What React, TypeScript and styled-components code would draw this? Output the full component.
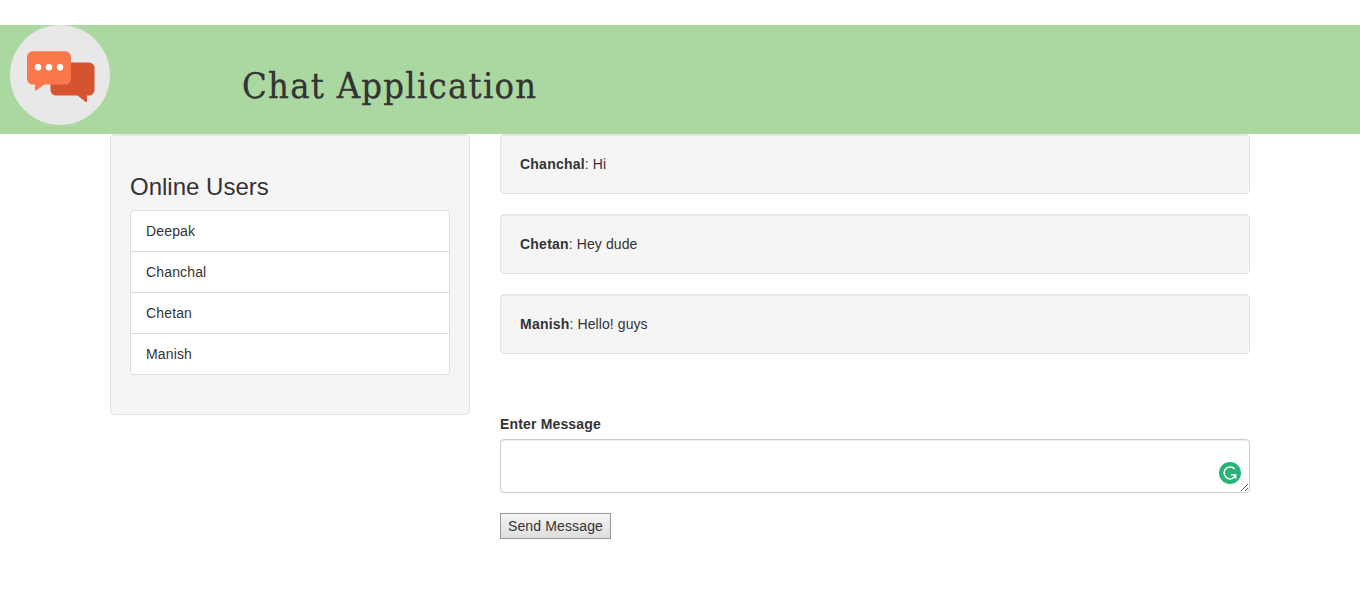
import React from "react";
import styled, { createGlobalStyle } from "styled-components";

const GlobalStyle = createGlobalStyle`
  *, *::before, *::after { box-sizing: border-box; }
  body {
    margin: 0;
    background: #fff;
    color: #333;
    font: 14px/20px "Liberation Sans", Arial, sans-serif;
  }
`;

const Page = styled.div`
  padding-top: 25px;
`;

const Header = styled.header`
  display: flex;
  height: 109px;
  padding-left: 10px;
  background: #abd8a0;
`;

const Logo = styled.svg`
  flex: none;
  width: 100px;
  height: 100px;
`;

const Title = styled.h1`
  margin: 39px 0 0 132px;
  font-family: "Century Schoolbook", "DejaVu Serif Condensed", "DejaVu Serif", serif;
  font-size: 36px;
  font-stretch: condensed;
  font-weight: 400;
  line-height: 44px;
  letter-spacing: 1.28px;
  white-space: nowrap;
  -webkit-text-stroke: 0.3px #333;
`;

const Columns = styled.main`
  display: grid;
  grid-template-columns: 360px 750px;
  column-gap: 30px;
  align-items: start;
  width: 1140px;
  margin: 0 auto;
`;

const Well = styled.div`
  margin-bottom: 20px;
  padding: 19px;
  background: #f5f5f5;
  border: 1px solid #e3e3e3;
  border-radius: 4px;
  box-shadow: inset 0 1px 1px rgba(0, 0, 0, 0.05);
`;

const PanelTitle = styled.h3`
  margin: 20px 0 10px;
  font-size: 24px;
  font-weight: 500;
  line-height: 26px;
`;

const UserList = styled.ul`
  margin: 0 0 20px;
  padding: 0;
  list-style: none;
  background: #fff;
  border: 1px solid #ddd;
  border-radius: 4px;
`;

const User = styled.li`
  height: 41px;
  padding: 10px 15px;
  letter-spacing: 0.15px;
  border-bottom: 1px solid #ddd;
  &:last-child {
    height: 40px;
    border-bottom: 0;
  }
`;

const Message = styled(Well)`
  letter-spacing: 0.08px;
`;

const Sender = styled.b`
  letter-spacing: 0.23px;
`;

const Form = styled.form`
  margin-top: 60px;
`;

const Label = styled.label`
  display: block;
  margin-bottom: 5px;
  font-weight: 700;
  letter-spacing: 0.16px;
`;

const Field = styled.div`
  position: relative;
  height: 54px;
  margin-bottom: 20px;
`;

const MessageBox = styled.textarea`
  display: block;
  width: 100%;
  height: 54px;
  padding: 6px 12px;
  font: inherit;
  color: #555;
  background: #fff;
  border: 1px solid #ccc;
  border-radius: 4px;
  box-shadow: inset 0 1px 1px rgba(0, 0, 0, 0.075);
  resize: none;
  outline: none;
`;

const Assistant = styled.svg`
  position: absolute;
  right: 9px;
  bottom: 9px;
  width: 22px;
  height: 22px;
`;

const Grip = styled.svg`
  position: absolute;
  right: 1px;
  bottom: 1px;
  width: 9px;
  height: 9px;
`;

const SendButton = styled.button`
  display: block;
  width: 111px;
  height: 26px;
  padding: 0;
  font: inherit;
  letter-spacing: 0.14px;
  color: #333;
  white-space: nowrap;
  background: linear-gradient(#f5f5f5, #dddddd);
  border: 1px solid #999;
  border-radius: 0;
`;

const users = ["Deepak", "Chanchal", "Chetan", "Manish"];
const messages = [
  { from: "Chanchal", text: "Hi" },
  { from: "Chetan", text: "Hey dude" },
  { from: "Manish", text: "Hello! guys" },
];

export default function App() {
  return (
    <Page>
      <GlobalStyle />
      <Header>
        <Logo viewBox="0 0 100 100" aria-hidden="true">
          <circle cx="50" cy="50" r="50" fill="#e8e8e8" />
          <path
            d="M46 37.5H79a5.5 5.5 0 0 1 5.5 5.5V65a5.5 5.5 0 0 1-5.5 5.5H77V76q0 1.5-1.5.8L67.5 70.5H46a5.5 5.5 0 0 1-5.5-5.5V43a5.5 5.5 0 0 1 5.5-5.5Z"
            fill="#d5532f"
          />
          <path
            d="M22.5 26.3H55.5A5.5 5.5 0 0 1 61 31.8V54a5.5 5.5 0 0 1-5.5 5.5H34.5L26.5 65.3q-1.5.7-1.5-.8V59.5H22.5A5.5 5.5 0 0 1 17 54V31.8a5.5 5.5 0 0 1 5.5-5.5Z"
            fill="#fb784d"
          />
          <g fill="#fff">
            <circle cx="28" cy="42.3" r="3.2" />
            <circle cx="39" cy="42.3" r="3.2" />
            <circle cx="50" cy="42.3" r="3.2" />
          </g>
        </Logo>
        <Title>Chat Application</Title>
      </Header>
      <Columns>
        <Well>
          <PanelTitle>Online Users</PanelTitle>
          <UserList>
            {users.map((name) => (
              <User key={name}>{name}</User>
            ))}
          </UserList>
        </Well>
        <section>
          {messages.map(({ from, text }) => (
            <Message key={from}>
              <Sender>{from}</Sender>: {text}
            </Message>
          ))}
          <Form>
            <Label htmlFor="message">Enter Message</Label>
            <Field>
              <MessageBox id="message" />
              <Assistant viewBox="0 0 22 22" aria-hidden="true">
                <circle cx="11" cy="11" r="11" fill="#27b376" />
                <path
                  d="M15.6 6.9A6 6 0 1 0 15.5 15"
                  fill="none"
                  stroke="#fff"
                  strokeWidth="1.5"
                />
                <path d="M11.8 12H17.4V17.2L15.4 15.2L14 13.4H11.8Z" fill="#fff" />
              </Assistant>
              <Grip viewBox="0 0 9 9" aria-hidden="true">
                <path d="M1 8 8 1M5 8 8 5" stroke="#666" strokeWidth="1" />
              </Grip>
            </Field>
            <SendButton type="button">Send Message</SendButton>
          </Form>
        </section>
      </Columns>
    </Page>
  );
}
